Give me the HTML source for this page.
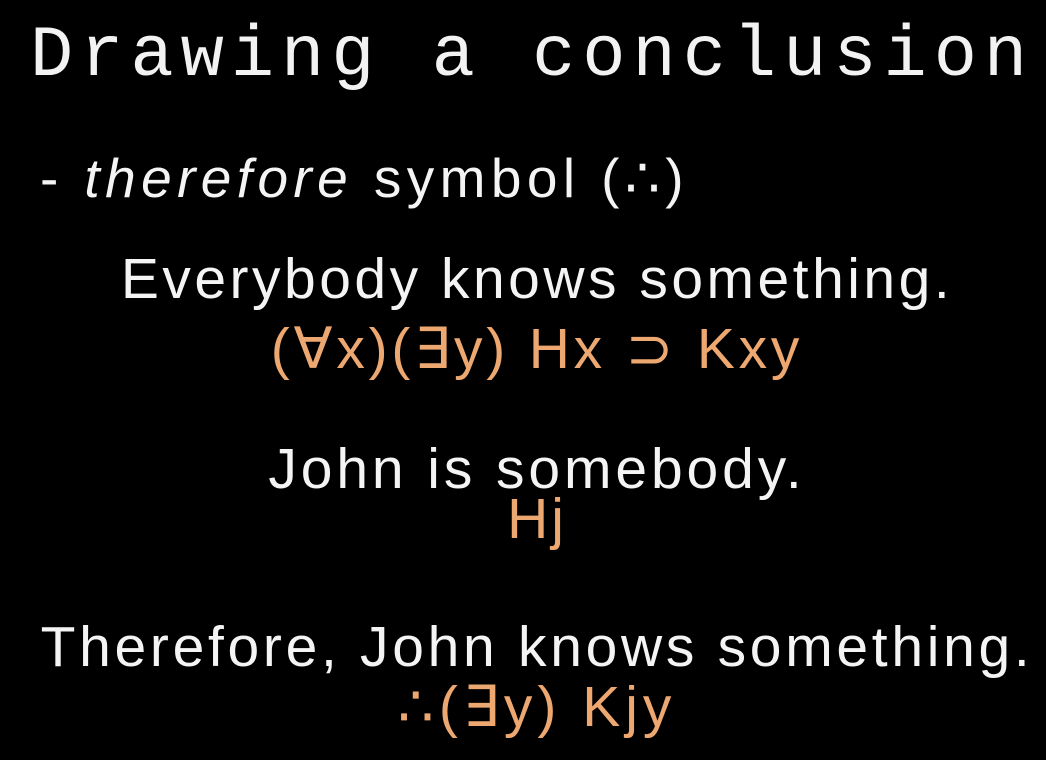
<!DOCTYPE html>
<html><head><meta charset="utf-8"><style>
html,body{margin:0;padding:0;background:#000;width:1046px;height:760px;overflow:hidden}
.t{position:absolute;white-space:nowrap;line-height:1;font-family:"Liberation Sans","DejaVu Sans",sans-serif;color:#f4f4f4}
.c{left:0;width:1074px;text-align:center}
.o{color:#eda770}
</style></head><body>
<div class="t" style="left:30px;top:20px;font-family:'Liberation Mono',monospace;font-size:72px;letter-spacing:7px;color:#f2f2f2">Drawing a conclusion</div>
<div class="t" style="left:40px;top:151px;font-size:55px;letter-spacing:5.4px">- <i>therefore</i> symbol (∴)</div>
<div class="t c" style="top:251px;font-size:57px;letter-spacing:3.5px">Everybody knows something.</div>
<div class="t c o" style="top:321px;font-size:57px;letter-spacing:3.8px">(∀x)(∃y) Hx ⊃ Kxy</div>
<div class="t c" style="top:441px;font-size:57px;letter-spacing:3.9px">John is somebody.</div>
<div class="t c o" style="top:491px;font-size:57px;letter-spacing:3px">Hj</div>
<div class="t c" style="top:619px;font-size:57px;letter-spacing:3.7px">Therefore, John knows something.</div>
<div class="t c o" style="top:679px;font-size:57px;letter-spacing:5px">∴(∃y) Kjy</div>
</body></html>
